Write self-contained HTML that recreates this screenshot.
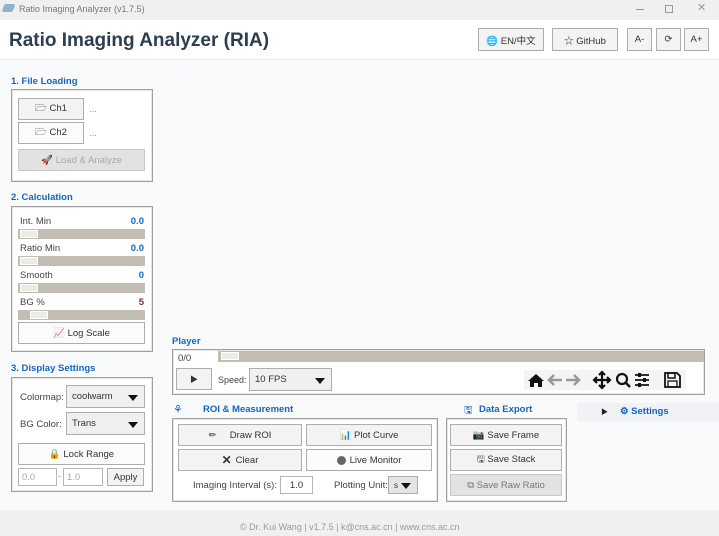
<!DOCTYPE html>
<html><head><meta charset="utf-8">
<style>
*{box-sizing:border-box;margin:0;padding:0}
body{width:719px;height:536px;overflow:hidden;background:#f9fafb;font-family:"Liberation Sans","Noto Sans CJK SC",sans-serif;font-size:10px;color:#333;position:relative}
.a{position:absolute}
.tb{left:0;top:0;width:719px;height:20px;background:#f0f0f0}
.hd{left:0;top:20px;width:719px;height:40px;background:#fff;border-bottom:1px solid #e4e6ea}
.btn{position:absolute;border:1px solid #adadad;background:#f3f3f3;display:flex;align-items:center;justify-content:center;font-size:9.5px;color:#333;gap:4px;white-space:nowrap}
.btn.w{background:#fbfbfb}
.btn.dis{color:#a8a8a8;background:#e2e2e2;border-color:#c8c8c8}
.sec{position:absolute;color:#1565c0;font-weight:bold;font-size:9.5px;white-space:nowrap}
.box{position:absolute;border:1px solid #a0a0a0;background:#fff;box-shadow:inset 0 0 0 1px #e6e6e6}
.lbl{position:absolute;font-size:9.5px;color:#444;white-space:nowrap}
.val{position:absolute;font-size:9.5px;font-weight:bold;color:#1565c0;text-align:right}
.sl{position:absolute;height:10px;background:#c2bdb3}
.th{position:absolute;top:1px;width:18px;height:8px;background:#ecebe7;border:1px solid #fff}
.cb{position:absolute;border:1px solid #adadad;background:#f0f0f0;font-size:9.5px;padding-left:5px;display:flex;align-items:center}
.cb:after{content:"";position:absolute;right:6px;top:50%;margin-top:-2px;border-left:5px solid transparent;border-right:5px solid transparent;border-top:6px solid #111}
.in{position:absolute;border:1px solid #b5b5b5;background:#fff;font-size:9.5px;padding-left:3px;display:flex;align-items:center}
</style></head><body>
<div class="a tb"></div>
<div class="a" style="left:3px;top:4px;width:11px;height:8px;background:#8fb3cf;border-radius:2px;transform:skewX(-20deg)"></div>
<div class="a" style="left:19px;top:4px;font-size:9px;color:#777">Ratio Imaging Analyzer (v1.7.5)</div>
<div class="a" style="left:636px;top:9px;width:8px;height:1px;background:#999"></div>
<div class="a" style="left:665px;top:5px;width:8px;height:8px;border:1px solid #999"></div>
<div class="a" style="left:697px;top:1px;font-size:11px;color:#999">✕</div>
<div class="a hd"></div>
<div class="a" style="left:9px;top:30px;font-size:19px;font-weight:bold;color:#2c3e50">Ratio Imaging Analyzer (RIA)</div>
<div class="btn" style="left:478px;top:28px;width:66px;height:23px">🌐 EN/中文</div>
<div class="btn" style="left:552px;top:28px;width:66px;height:23px">☆ GitHub</div>
<div class="btn" style="left:627px;top:28px;width:25px;height:23px">A-</div>
<div class="btn" style="left:656px;top:28px;width:25px;height:23px">⟳</div>
<div class="btn" style="left:684px;top:28px;width:25px;height:23px">A+</div>

<div class="sec" style="left:11px;top:76px">1. File Loading</div>
<div class="box" style="left:11px;top:89px;width:142px;height:93px"></div>
<div class="btn" style="left:18px;top:98px;width:66px;height:22px">🗁 Ch1</div>
<div class="lbl" style="left:89px;top:104px;color:#888">...</div>
<div class="btn w" style="left:18px;top:122px;width:66px;height:22px">🗁 Ch2</div>
<div class="lbl" style="left:89px;top:128px;color:#888">...</div>
<div class="btn dis" style="left:18px;top:149px;width:127px;height:22px">🚀 Load &amp; Analyze</div>

<div class="sec" style="left:11px;top:192px">2. Calculation</div>
<div class="box" style="left:11px;top:206px;width:142px;height:146px"></div>
<div class="lbl" style="left:20px;top:216px">Int. Min</div><div class="val" style="left:100px;top:216px;width:44px">0.0</div>
<div class="sl" style="left:18px;top:229px;width:127px"><div class="th" style="left:2px"></div></div>
<div class="lbl" style="left:20px;top:243px">Ratio Min</div><div class="val" style="left:100px;top:243px;width:44px">0.0</div>
<div class="sl" style="left:18px;top:256px;width:127px"><div class="th" style="left:2px"></div></div>
<div class="lbl" style="left:20px;top:270px">Smooth</div><div class="val" style="left:100px;top:270px;width:44px">0</div>
<div class="sl" style="left:18px;top:283px;width:127px"><div class="th" style="left:2px"></div></div>
<div class="lbl" style="left:20px;top:297px">BG %</div><div class="val" style="left:100px;top:297px;width:44px;color:#7b2d26">5</div>
<div class="sl" style="left:18px;top:310px;width:127px"><div class="th" style="left:12px"></div></div>
<div class="btn w" style="left:18px;top:322px;width:127px;height:22px">📈 Log Scale</div>

<div class="sec" style="left:11px;top:363px">3. Display Settings</div>
<div class="box" style="left:11px;top:377px;width:142px;height:115px"></div>
<div class="lbl" style="left:20px;top:392px">Colormap:</div>
<div class="cb" style="left:66px;top:385px;width:79px;height:23px">coolwarm</div>
<div class="lbl" style="left:20px;top:419px">BG Color:</div>
<div class="cb" style="left:66px;top:412px;width:79px;height:23px">Trans</div>
<div class="btn w" style="left:18px;top:443px;width:127px;height:22px">🔒 Lock Range</div>
<div class="in" style="left:18px;top:468px;width:39px;height:18px;color:#aaa">0.0</div>
<div class="lbl" style="left:58px;top:471px;color:#888">-</div>
<div class="in" style="left:63px;top:468px;width:40px;height:18px;color:#aaa">1.0</div>
<div class="btn" style="left:107px;top:468px;width:37px;height:18px">Apply</div>

<div class="sec" style="left:172px;top:336px">Player</div>
<div class="box" style="left:172px;top:349px;width:533px;height:46px"></div>
<div class="lbl" style="left:178px;top:353px">0/0</div>
<div class="sl" style="left:218px;top:351px;width:486px;height:11px"><div class="th" style="left:3px"></div></div>
<div class="btn" style="left:176px;top:368px;width:36px;height:22px;font-size:8px">▶</div>
<div class="lbl" style="left:218px;top:375px;font-size:9px">Speed:</div>
<div class="cb" style="left:249px;top:368px;width:83px;height:23px">10 FPS</div>
<div class="a" style="left:524px;top:370px;width:162px;height:20px;background:#f3f4f6"></div>
<svg class="a" style="left:526px;top:370px" width="160" height="20" viewBox="0 0 160 20">
<path d="M2 11 L10 4 L18 11 L16 11 L16 17 L12 17 L12 13 L8 13 L8 17 L4 17 L4 11 Z" fill="#111"/>
<path d="M22 10 H36 M28 5 L23 10 L28 15" stroke="#999" stroke-width="2.5" fill="none"/>
<path d="M40 10 H54 M48 5 L53 10 L48 15" stroke="#999" stroke-width="2.5" fill="none"/>
<path d="M76 2 V18 M68 10 H84 M73 5 L76 2 L79 5 M73 15 L76 18 L79 15 M71 7 L68 10 L71 13 M81 7 L84 10 L81 13" stroke="#111" stroke-width="2.2" fill="none"/>
<circle cx="96" cy="9" r="5" stroke="#111" stroke-width="2.2" fill="none"/><path d="M99.5 12.5 L104 17" stroke="#111" stroke-width="2.5"/>
<path d="M109 5 H123 M109 10 H123 M109 15 H123" stroke="#111" stroke-width="1.8"/>
<rect x="112" y="3" width="3" height="4" fill="#111"/><rect x="117" y="8" width="3" height="4" fill="#111"/><rect x="112" y="13" width="3" height="4" fill="#111"/>
<path d="M139 3 H151 L154 6 V17 H139 Z" stroke="#111" stroke-width="1.8" fill="none"/><rect x="142" y="3" width="7" height="5" stroke="#111" stroke-width="1.5" fill="none"/><rect x="142" y="11" width="9" height="6" stroke="#111" stroke-width="1.3" fill="none"/>
</svg>

<div class="a" style="left:173px;top:403px;font-size:11px;color:#1565c0">⚘</div>
<div class="sec" style="left:203px;top:404px">ROI &amp; Measurement</div>
<div class="box" style="left:172px;top:418px;width:266px;height:84px"></div>
<div class="btn" style="left:178px;top:424px;width:124px;height:22px">✏&nbsp;&nbsp;&nbsp;&nbsp;&nbsp;Draw ROI</div>
<div class="btn" style="left:306px;top:424px;width:126px;height:22px">📊 Plot Curve</div>
<div class="btn" style="left:178px;top:449px;width:124px;height:22px"><b style="font-size:12px">✕</b> Clear</div>
<div class="btn w" style="left:306px;top:449px;width:126px;height:22px"><span style="display:inline-block;width:9px;height:9px;border-radius:50%;background:#666"></span> Live Monitor</div>
<div class="lbl" style="left:193px;top:480px">Imaging Interval (s):</div>
<div class="in" style="left:280px;top:476px;width:33px;height:18px;justify-content:center;padding:0">1.0</div>
<div class="lbl" style="left:334px;top:480px">Plotting Unit:</div>
<div class="cb" style="left:388px;top:476px;width:30px;height:18px;font-size:8px;background:#e4e4e4">s</div>

<div class="a" style="left:464px;top:403px;font-size:10px;color:#1565c0">🖫</div>
<div class="sec" style="left:479px;top:404px">Data Export</div>
<div class="box" style="left:446px;top:418px;width:121px;height:84px"></div>
<div class="btn" style="left:450px;top:424px;width:112px;height:22px">📷 Save Frame</div>
<div class="btn" style="left:450px;top:449px;width:112px;height:22px">🖫 Save Stack</div>
<div class="btn dis" style="left:450px;top:474px;width:112px;height:22px;color:#777">⧉ Save Raw Ratio</div>

<div class="a" style="left:577px;top:403px;width:142px;height:18px;background:#f0f2f5"></div>
<div class="a" style="left:601px;top:407px;font-size:7px;color:#222">▶</div>
<div class="sec" style="left:620px;top:406px">⚙ Settings</div>

<div class="a" style="left:0;top:510px;width:719px;height:26px;background:#eef0f2"></div>
<div class="a" style="left:240px;top:522px;font-size:9px;color:#999">© Dr. Kui Wang | v1.7.5 | k@cns.ac.cn | www.cns.ac.cn</div>
</body></html>
